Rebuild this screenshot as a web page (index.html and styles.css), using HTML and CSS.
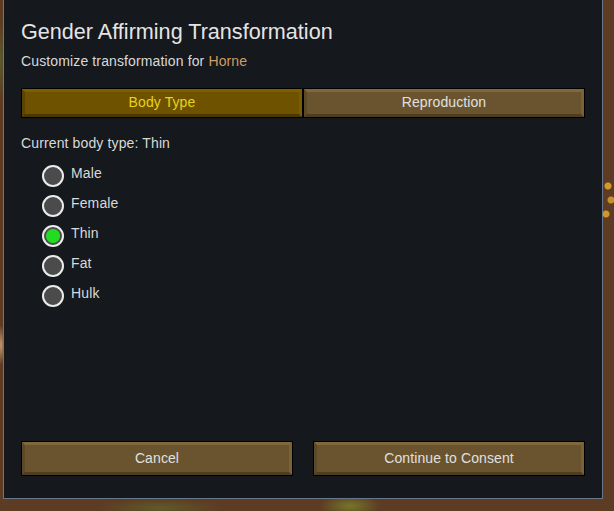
FILE: index.html
```html
<!DOCTYPE html>
<html lang="en">
<head>
  <meta charset="UTF-8" />
  <meta name="viewport" content="width=device-width, initial-scale=1.0" />
  <title>Gender Affirming Transformation</title>
  <link rel="stylesheet" href="styles.css">
</head>
<body>
  <div class="dialog">
    <h1 class="title">Gender Affirming Transformation</h1>
    <p class="subtitle">Customize transformation for <span class="pawn-name">Horne</span></p>

    <div class="tabs">
      <div class="btn tab selected"><span class="btn-face">Body Type</span></div>
      <div class="btn tab"><span class="btn-face">Reproduction</span></div>
    </div>

    <p class="current">Current body type: Thin</p>

    <div class="radio-list">
      <div class="radio-row"><span class="radio"></span><span class="radio-label">Male</span></div>
      <div class="radio-row"><span class="radio"></span><span class="radio-label">Female</span></div>
      <div class="radio-row"><span class="radio on"></span><span class="radio-label">Thin</span></div>
      <div class="radio-row"><span class="radio"></span><span class="radio-label">Fat</span></div>
      <div class="radio-row"><span class="radio"></span><span class="radio-label">Hulk</span></div>
    </div>

    <div class="footer">
      <div class="btn action"><span class="btn-face">Cancel</span></div>
      <div class="btn action"><span class="btn-face">Continue to Consent</span></div>
    </div>
  </div>
</body>
</html>
```

FILE: styles.css
```css
body {
  margin: 0;
  height: 511px;
  overflow: hidden;
  font-family: "Liberation Sans", Arial, sans-serif;
  color: #d9d9d9;
  /* dirt ground behind the window */
  background-color: #5e3c24;
  background-image:
    radial-gradient(circle at 608px 186px, #d39a2a 0 3px, transparent 4px),
    radial-gradient(circle at 611px 200px, #c8902a 0 3px, transparent 4px),
    radial-gradient(circle at 606px 214px, #cf9628 0 3px, transparent 4px),
    radial-gradient(ellipse 60px 10px at 160px 508px, #5f5a28, transparent),
    radial-gradient(ellipse 30px 12px at 350px 506px, #76762a, transparent),
    radial-gradient(ellipse 4px 20px at 1px 345px, #c49a70, transparent),
    radial-gradient(ellipse 6px 40px at 1px 60px, #5a5a2a, transparent);
}

.dialog {
  box-sizing: border-box;
  width: 600px;
  height: 500px;
  margin: -1px 0 0 3px;
  padding: 19px 17px 22px;
  background-color: #15181d;
  border: 1px solid #66778a;
  display: flex;
  flex-direction: column;
}

.title {
  margin: 0;
  font-size: 21.6px;
  line-height: 26px;
  font-weight: normal;
  color: #e4e4e4;
}

.subtitle {
  margin: 7px 0 0;
  font-size: 14px;
  line-height: 18px;
  letter-spacing: 0.13px;
}

.pawn-name {
  color: #d19c62;
}

/* RimWorld style bevelled button */
.btn {
  box-sizing: border-box;
  border: 1px solid #000;
  font-size: 14px;
  letter-spacing: 0.1px;
  color: #e0e0e0;
}

.btn-face {
  box-sizing: border-box;
  display: flex;
  align-items: center;
  justify-content: center;
  height: 100%;
  padding-bottom: 2px;
  background-color: #6a542f;
  border-style: solid;
  border-width: 3px;
  border-color: #80683a #7a6236 #4e3d20 #5c4927;
}

.tabs {
  display: flex;
  margin-top: 18px;
}

.tab {
  width: 282px;
  height: 30px;
}

.tab.selected .btn-face {
  background-color: #6e5200;
  border-color: #7e5f00 #7a5b00 #4b3800 #5b4400;
  color: #e6d31a;
}

.current {
  margin: 16px 0 0;
  font-size: 14px;
  line-height: 18px;
  letter-spacing: 0.13px;
}

.radio-list {
  margin: 9px 0 0 21px;
  display: flex;
  flex-direction: column;
}

.radio-row {
  box-sizing: border-box;
  height: 30px;
  padding-top: 4px;
  display: flex;
  align-items: flex-start;
  gap: 7px;
  font-size: 14px;
  letter-spacing: 0.13px;
}

.radio {
  box-sizing: border-box;
  width: 22px;
  height: 22px;
  border-radius: 50%;
  border: 2px solid #ececec;
  background-color: #4b4b4b;
}

.radio.on {
  background: radial-gradient(circle, #22dc22 0 6.5px, #4b4b4b 7.5px);
}

.radio-label {
  margin-top: -1px;
  line-height: 18px;
}

.footer {
  margin-top: auto;
  display: flex;
  justify-content: space-between;
}

.action {
  width: 272px;
  height: 35px;
}
```
